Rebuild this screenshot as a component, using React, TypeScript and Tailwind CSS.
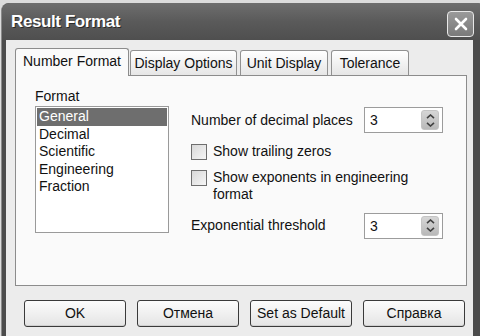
import React from "react";

const font = { fontFamily: '"Liberation Sans", Arial, sans-serif' };

function Spin({ value }: { value: string }) {
  return (
    <div className="w-[79px] h-[26px] border border-[#9c9c9c] bg-white flex items-center justify-between pl-[5px] pr-[3px]">
      <span className="text-[14px] leading-none text-[#111]">{value}</span>
      <div className="w-[18px] h-[20px] rounded-[3px] bg-gradient-to-b from-[#d6d6d6] to-[#b9b9b9] border border-[#c4c4c4] flex flex-col items-center justify-center gap-[3px]">
        <svg width="9" height="5" viewBox="0 0 9 5">
          <path d="M1 4.2 L4.5 1 L8 4.2" fill="none" stroke="#404040" strokeWidth="1.6" />
        </svg>
        <svg width="9" height="5" viewBox="0 0 9 5">
          <path d="M1 0.8 L4.5 4 L8 0.8" fill="none" stroke="#404040" strokeWidth="1.6" />
        </svg>
      </div>
    </div>
  );
}

function Check() {
  return (
    <div className="w-[16px] h-[16px] shrink-0 border border-[#6e6e6e] bg-gradient-to-br from-[#d8d8d8] to-[#f6f6f6]" />
  );
}

function Btn({ label }: { label: string }) {
  return (
    <div className="w-[102px] h-[27px] rounded-[3px] border border-[#3a3a3a] bg-gradient-to-b from-[#fcfcfc] to-[#e4e4e4] flex items-center justify-center text-[14px] text-[#111] shadow-[inset_0_-1px_0_#cfcfcf]">
      {label}
    </div>
  );
}

export default function App() {
  const tabs = [
    { label: "Number Format", w: 114, active: true },
    { label: "Display Options", w: 107 },
    { label: "Unit Display", w: 88 },
    { label: "Tolerance", w: 78 },
  ];
  const items = ["General", "Decimal", "Scientific", "Engineering", "Fraction"];
  return (
    <div className="w-[480px] h-[336px] bg-[#dcdcdc] pt-[3px] pl-[1px] overflow-hidden" style={font}>
      <div className="w-[484px] h-[340px] rounded-t-[8px] bg-[#4c4c4c] flex flex-col pl-[4px] pr-[12px] border-l border-[#8a8a8a]">
        <div className="h-[37px] shrink-0 flex items-center justify-between rounded-t-[8px] bg-gradient-to-b from-[#6e6e6e] via-[#5a5a5a] to-[#4f4f4f] -ml-[4px] -mr-[12px] pl-[9px] pr-[11px]">
          <span className="text-white font-bold text-[17px] tracking-[-0.4px] [text-shadow:1px_1px_0_#2a2a2a]">
            Result Format
          </span>
          <div className="w-[27px] h-[26px] rounded-[4px] border-[1.5px] border-[#e8e8e8] bg-gradient-to-b from-[#9a9a9a] to-[#7a7a7a] flex items-center justify-center mt-[5px]">
            <svg width="14" height="14" viewBox="0 0 14 14">
              <path d="M2 2 L12 12 M12 2 L2 12" stroke="white" strokeWidth="2.6" strokeLinecap="round" />
            </svg>
          </div>
        </div>
        <div className="flex-1 bg-[#ececec] pl-[9px] pr-[6px] pt-[7px] flex flex-col">
          <div className="flex items-end ml-[2px] h-[28px]">
            {tabs.map((t) =>
              t.active ? (
                <div
                  key={t.label}
                  style={{ width: t.w }}
                  className="h-[28px] -mb-px relative z-10 bg-[#fafafa] border border-b-0 border-[#8c8c8c] rounded-t-[3px] flex items-center justify-center text-[14px] text-[#111] -ml-[2px] mr-[1px] pb-[2px]"
                >
                  {t.label}
                </div>
              ) : (
                <div
                  key={t.label}
                  style={{ width: t.w }}
                  className="h-[25px] bg-gradient-to-b from-[#ffffff] to-[#e6e6e6] border border-b-0 border-[#919191] rounded-t-[3px] flex items-center justify-center text-[14px] text-[#111] mr-[3px]"
                >
                  {t.label}
                </div>
              )
            )}
          </div>
          <div className="h-[211px] w-[452px] border border-[#8c8c8c] bg-[#fafafa] flex pt-[12px] pl-[19px]">
            <div className="flex flex-col">
              <span className="text-[14px] leading-[17px] text-[#111]">Format</span>
              <div className="mt-[1px] w-[134px] h-[127px] border border-[#9a9a9a] bg-white p-[1px]">
                {items.map((it, i) => (
                  <div
                    key={it}
                    className={
                      "h-[17.5px] leading-[17.5px] text-[14px] pl-[2px] " +
                      (i === 0 ? "bg-[#6e6e6e] text-white" : "text-[#111]")
                    }
                  >
                    {it}
                  </div>
                ))}
              </div>
            </div>
            <div className="ml-[22px] mt-[19px] w-[252px] flex flex-col text-[14px] text-[#111]">
              <div className="flex items-center justify-between h-[26px]">
                <span>Number of decimal places</span>
                <Spin value="3" />
              </div>
              <div className="flex items-start gap-[6px] mt-[11px]">
                <Check />
                <span className="leading-[17px] -mt-[1px]">Show trailing zeros</span>
              </div>
              <div className="flex items-start gap-[6px] mt-[10px]">
                <Check />
                <span className="leading-[17px] -mt-[1px]">
                  Show exponents in engineering
                  <br />
                  format
                </span>
              </div>
              <div className="flex items-center justify-between h-[27px] mt-[9px]">
                <span>Exponential threshold</span>
                <Spin value="3" />
              </div>
            </div>
          </div>
          <div className="flex gap-[11px] pl-[9px] mt-[14px]">
            <Btn label="OK" />
            <Btn label="Отмена" />
            <Btn label="Set as Default" />
            <Btn label="Справка" />
          </div>
        </div>
      </div>
    </div>
  );
}
